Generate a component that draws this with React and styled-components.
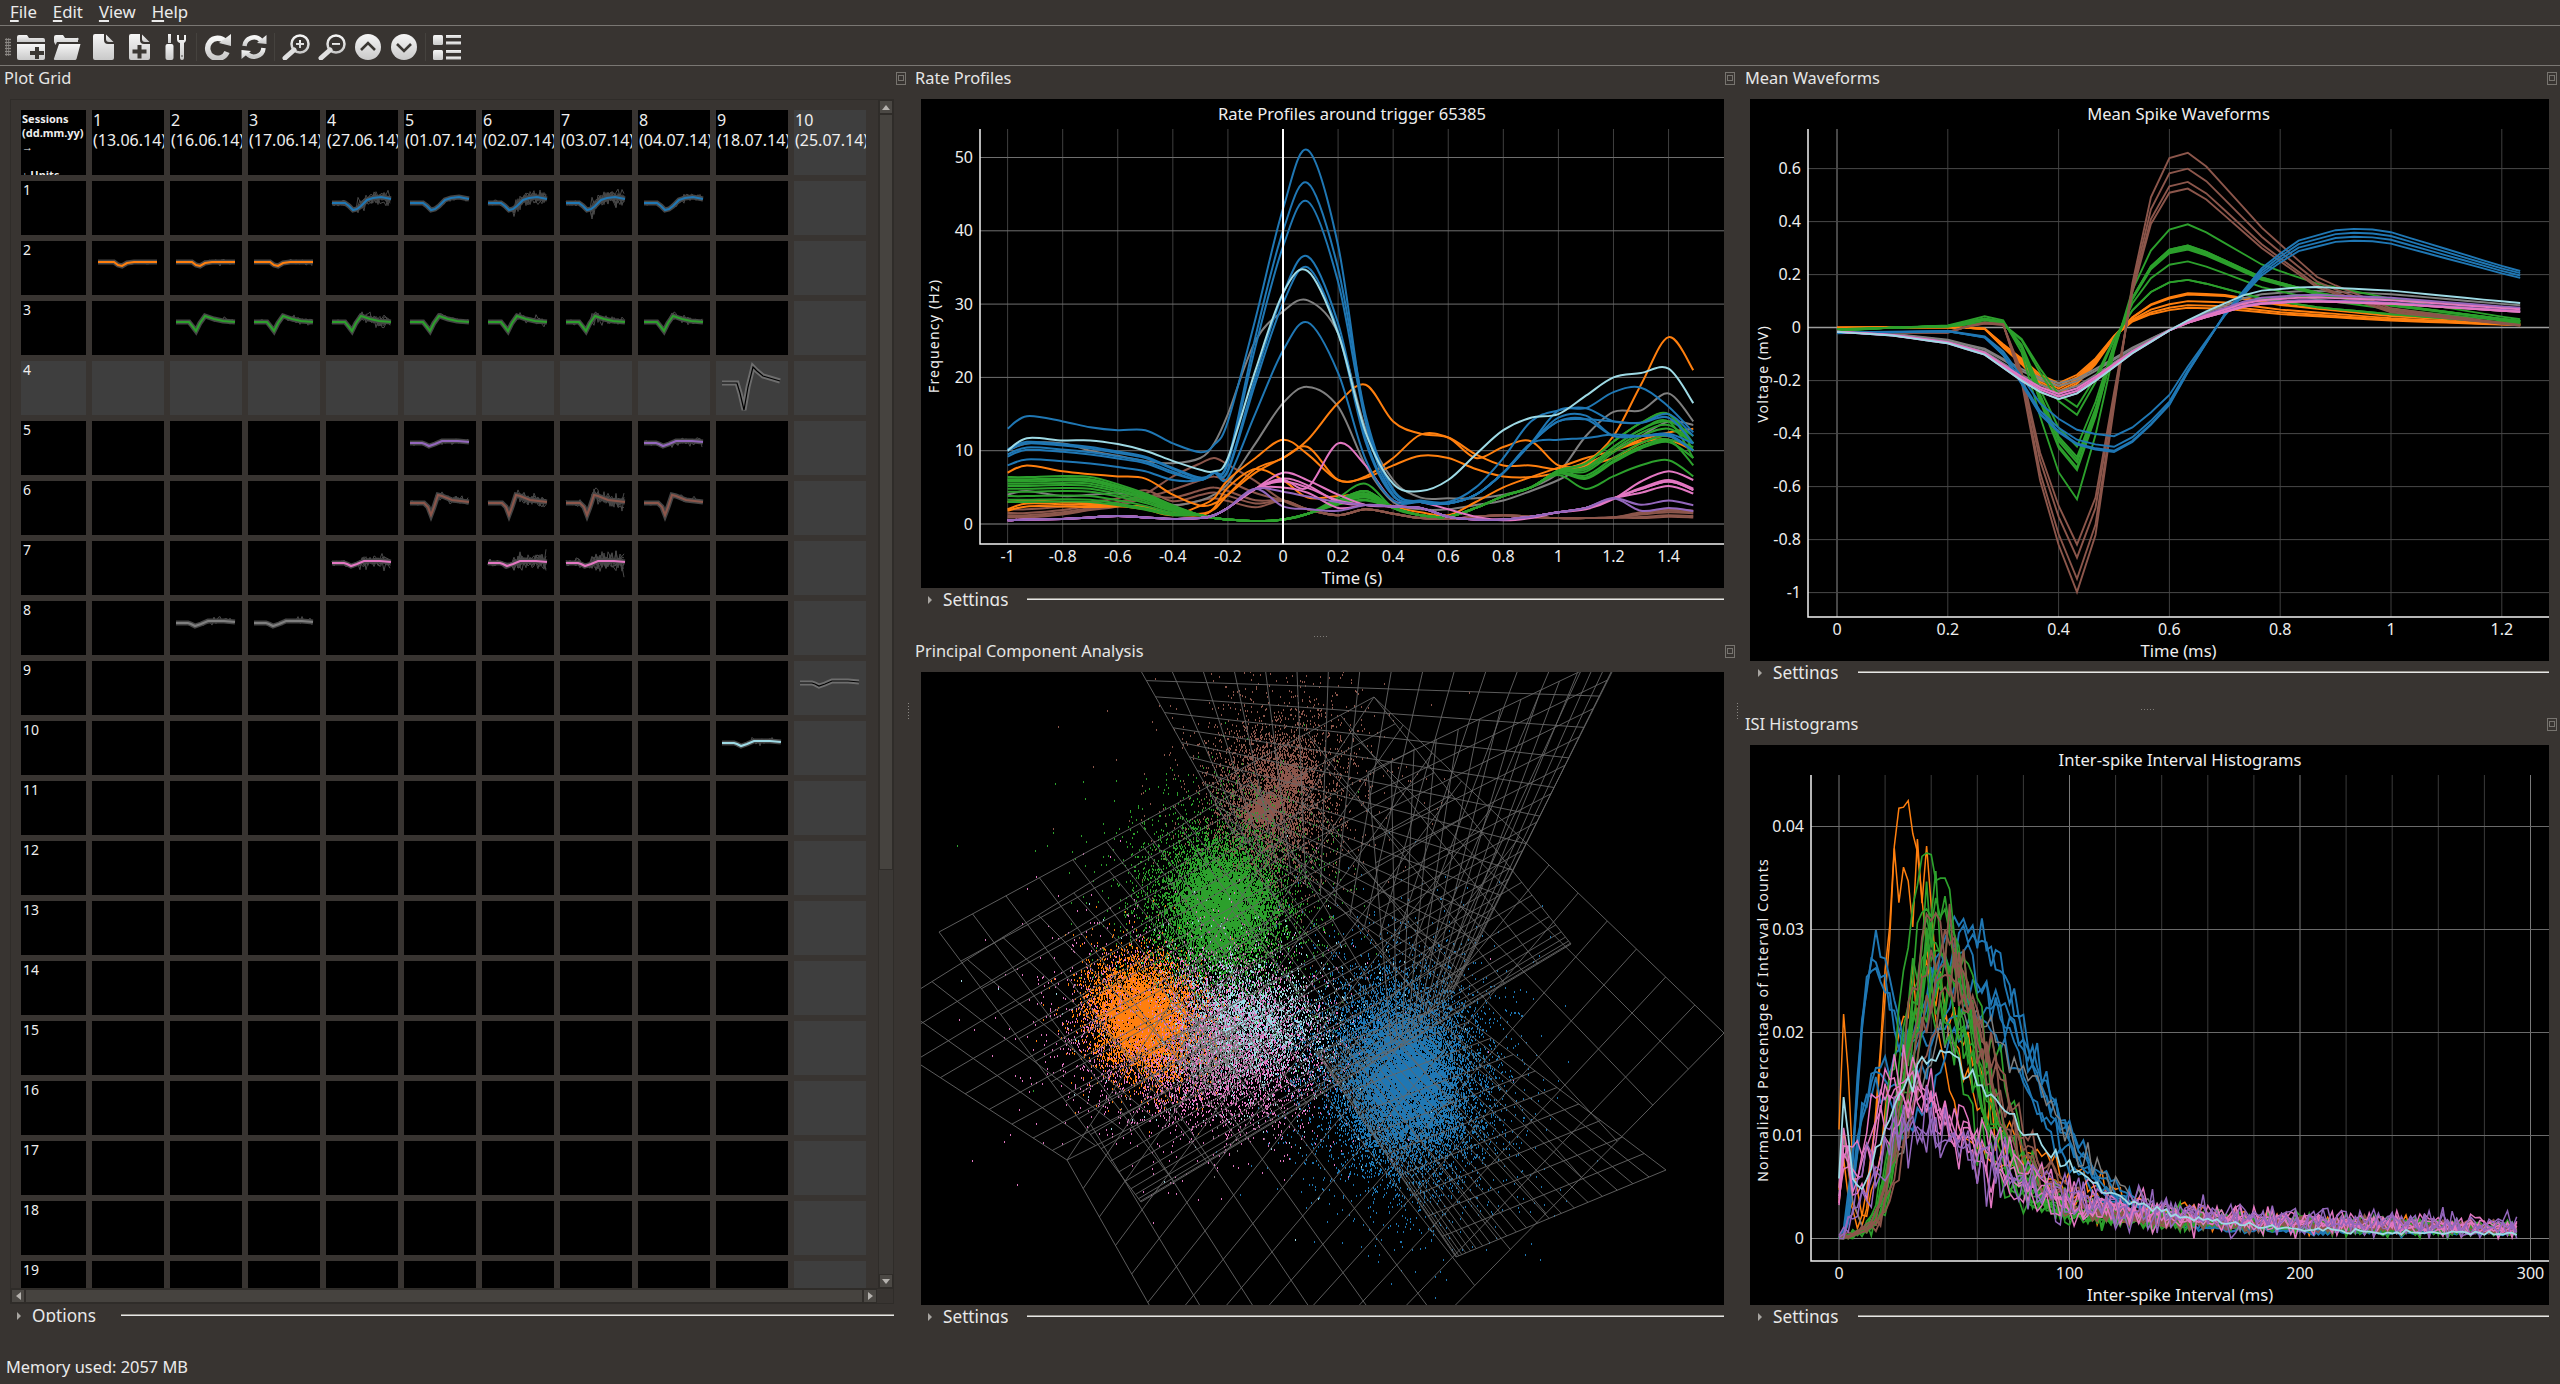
import React from "react";
import styled, { createGlobalStyle } from "styled-components";

const FONT = '"Noto Sans", "Open Sans", sans-serif';
const BG = "#383431";
const C = { blue: "#1f77b4", orange: "#ff7f0e", green: "#2ca02c", brown: "#8c564b", pink: "#e377c2", purple: "#9467bd", gray: "#7f7f7f", cyan: "#9edae5" };

/* ---------- deterministic random ---------- */
const rng = (seed) => {
  let a = seed >>> 0;
  return () => {
    a = (a + 0x6d2b79f5) | 0;
    let t = Math.imul(a ^ (a >>> 15), 1 | a);
    t = (t + Math.imul(t ^ (t >>> 7), 61 | t)) ^ t;
    return ((t ^ (t >>> 14)) >>> 0) / 4294967296;
  };
};
const gauss = (r) => Math.sqrt(-2 * Math.log(r() + 1e-9)) * Math.cos(2 * Math.PI * r());
const lerpKnots = (knots, t) => {
  if (t <= knots[0][0]) return knots[0][1];
  for (let i = 1; i < knots.length; i++) {
    if (t <= knots[i][0]) {
      const [a, b] = [knots[i - 1], knots[i]];
      return a[1] + ((b[1] - a[1]) * (t - a[0])) / (b[0] - a[0]);
    }
  }
  return knots[knots.length - 1][1];
};
const polyline = (pts) => "M" + pts.map((p) => `${p[0].toFixed(1)} ${p[1].toFixed(1)}`).join("L");
const spline = (pts) => {
  let d = `M${pts[0][0].toFixed(1)} ${pts[0][1].toFixed(1)}`;
  for (let i = 0; i < pts.length - 1; i++) {
    const p0 = pts[Math.max(i - 1, 0)], p1 = pts[i], p2 = pts[i + 1], p3 = pts[Math.min(i + 2, pts.length - 1)];
    const c1 = [p1[0] + (p2[0] - p0[0]) / 6, p1[1] + (p2[1] - p0[1]) / 6];
    const c2 = [p2[0] - (p3[0] - p1[0]) / 6, p2[1] - (p3[1] - p1[1]) / 6];
    d += `C${c1[0].toFixed(1)} ${c1[1].toFixed(1)} ${c2[0].toFixed(1)} ${c2[1].toFixed(1)} ${p2[0].toFixed(1)} ${p2[1].toFixed(1)}`;
  }
  return d;
};

/* ---------- rate profile data ---------- */
const T = [-1, -0.93, -0.8, -0.7, -0.6, -0.5, -0.4, -0.3, -0.25, -0.2, -0.1, 0, 0.09, 0.2, 0.3, 0.4, 0.5, 0.6, 0.7, 0.8, 0.9, 1, 1.1, 1.2, 1.3, 1.4, 1.49];
const blueRate = (p, L, R, right) => [L, 1.1 * L, 1.07 * L, 1.03 * L, 0.97 * L, 0.9 * L, 0.75 * L, Math.max(6, 0.62 * L), 7, p * 0.12 + 3, p * 0.55, p * 0.86, p, p * 0.75, p * 0.32, p * 0.08 + 1, 3, 2.8, 4, 7, 11, R, R * 1.02, ...(right || [R * 0.95, R * 0.92, R * 0.9, R * 0.75])];
const greenRate = (L, b, E, M) => [L, L, L * 1.02, L, L * 0.85, L * 0.65, L * 0.4, 1.2, 0.8, 0.6, 0.4, 0.6, 1.4, 2.6 + b * 0.4, 3 + b, 2.2, 1.2, 1, 2.2, 3.8, 5, 5.8 + E * 0.1, E * 0.55, E * 0.75, E * 0.92, E, M];
const brownRate = (L, P, R) => [L, L, L + 0.4, L + 1, L + 1.5, L + 2.6, P * 0.72, P * 0.92, P, P * 0.9, P * 0.65, 3.2, 2, 1.2, 2, 1.4, 0.8, 0.7, 1, 1.2, 1, 0.8, 0.8, 0.9, R * 0.8, R, R * 0.9];
const pinkRate = (P, b, E) => [0.5, 0.6, 0.7, 0.9, 1.1, 0.9, 0.7, 0.8, 1.2, 2.2, 4.8, P, P * 0.85, b, 2.6, 2.4, 2.2, 1, 0.6, 0.6, 1, 1.6, 2.2, 3.5, E * 0.82, E, E * 0.8];
const RATE = [
  [C.brown, brownRate(1.5, 9, 2)], [C.brown, brownRate(1, 6.5, 1.8)], [C.brown, brownRate(1.2, 5, 1.6)], [C.brown, brownRate(2, 4.3, 1)], [C.brown, brownRate(0.9, 3.5, 1.2)],
  [C.gray, [10, 11, 11, 10, 9.3, 8.6, 8.3, 9, 11, 15, 25, 29, 30.5, 26, 13, 6, 3.6, 3.5, 3.5, 4, 5, 7, 12, 15.3, 15.5, 17.8, 14]],
  [C.gray, [4, 4.5, 3.8, 4, 4.2, 3.8, 2.6, 3.2, 4, 5.5, 11, 16.5, 18.7, 16, 8, 3, 2, 2, 2.6, 3.2, 4.5, 6, 8, 10, 12, 14, 13.5]],
  [C.orange, [7, 8, 7.2, 6.8, 6.5, 6.2, 4, 2.5, 2.8, 4, 7, 9, 10.5, 6, 6.5, 9, 12.2, 11.8, 9.5, 8, 8, 7.5, 8.5, 12, 19, 25.5, 21]],
  [C.orange, [2, 2.8, 2.7, 2.6, 2.5, 2.2, 1.5, 1.4, 2, 4, 7.5, 9, 11.5, 16.5, 19, 14, 12.3, 11.8, 9, 10.5, 11.3, 8, 8.2, 10, 11.5, 12.5, 13]],
  [C.orange, [3, 3.2, 3, 2.8, 2.5, 2, 1.2, 2.5, 3.5, 6, 9, 11.5, 9.5, 6, 6.3, 8, 9.3, 9, 7.5, 6.5, 6.4, 7, 8, 9, 11, 12, 10]],
  [C.orange, [1.8, 2.4, 2.4, 2.3, 2.4, 2.4, 1.4, 1.2, 2.2, 5, 7.5, 6, 3.6, 3.8, 4, 2.4, 1.6, 1.2, 3, 5, 6.4, 7.7, 9, 10, 11.2, 11.5, 10]],
  [C.green, greenRate(6, 1.5, 15, 10)], [C.green, greenRate(5.8, 2.5, 14, 9)], [C.green, greenRate(6.1, 0.8, 11.5, 10.5)], [C.green, greenRate(5.5, 1, 11.2, 9)], [C.green, greenRate(4.4, 1.2, 13.5, 11)],
  [C.green, greenRate(3.8, 0.3, 8.7, 6.5)], [C.green, greenRate(3.3, 1.5, 11.5, 8)], [C.green, greenRate(3, 0.6, 15, 11)], [C.green, greenRate(6.4, 0.2, 12, 10)], [C.green, greenRate(5.2, 1.5, 13, 11)], [C.green, greenRate(4.8, 0.7, 14, 12)],
  [C.pink, [...pinkRate(6, 4, 7.2).slice(0, 12), 5, 11, 8, 3.2, 3, 2, 1, 0.5, 0.8, 1.6, 2, 3.4, 5.8, 7.2, 6]], [C.pink, pinkRate(7, 4, 6)], [C.pink, pinkRate(6.2, 3, 5.8)], [C.pink, pinkRate(5.8, 3.2, 5.2)], [C.pink, pinkRate(5, 2.2, 5.8)],
  [C.purple, pinkRate(4.4, 3, 3.2)], [C.purple, pinkRate(2.4, 1.8, 2.2)],
  [C.blue, [13, 14.7, 14, 13.2, 12.8, 12.8, 11, 9.8, 10.8, 14, 28, 43, 51, 38, 14, 4, 3.2, 3, 5, 9, 14, 15.5, 15.8, 14, 13.8, 14.5, 11]],
  [C.blue, blueRate(46.5, 10, 14.5, [12, 12, 12.2, 10])], [C.blue, blueRate(44, 10.2, 14, [12, 12, 12, 10])],
  [C.blue, blueRate(36.5, 9.5, 15.5, [18, 18.6, 16, 12.5])], [C.blue, blueRate(27.5, 8, 11.5, [12.2, 12, 12.3, 11])], [C.blue, blueRate(35, 9.2, 14, [14, 13.8, 15, 12])],
  [C.cyan, [10, 11.7, 11.4, 11.4, 10.9, 10, 8.6, 7.4, 7.2, 9, 21, 31.5, 34.5, 26, 12.5, 5.5, 4.5, 6, 9.5, 12.8, 14.5, 15, 17.5, 20, 20.6, 21.2, 16.5]],
];
const rateX = (t) => 362 + 275.4 * t;
const rateY = (v) => 425 - 7.33 * v;
const RATE_PATHS = RATE.map(([c, vs]) => ({ c, d: spline(vs.map((v, i) => [rateX(T[i]), rateY(v)])) }));

/* ---------- mean waveform data ---------- */
const brownTpl = [[0, -0.02], [0.2, -0.02], [0.267, 0.03], [0.3, 0.02], [0.333, -0.2], [0.367, -0.58], [0.4, -0.82], [0.433, -1], [0.467, -0.78], [0.5, -0.3], [0.533, 0.25], [0.567, 0.75], [0.6, 0.97], [0.633, 1], [0.667, 0.92], [0.77, 0.56], [0.87, 0.28], [1, 0.11], [1.23, 0.015]];
const greenTpl = [[0, -0.02], [0.2, 0.02], [0.267, 0.11], [0.3, 0.07], [0.333, -0.14], [0.367, -0.52], [0.4, -0.84], [0.433, -1], [0.467, -0.62], [0.5, -0.14], [0.533, 0.36], [0.567, 0.75], [0.6, 0.95], [0.633, 1], [0.667, 0.92], [0.77, 0.6], [0.87, 0.42], [1, 0.28], [1.23, 0.08]];
const orangeTpl = [[0, 0], [0.2, 0.01], [0.267, -0.02], [0.3, -0.3], [0.333, -0.55], [0.367, -0.85], [0.4, -1], [0.433, -0.85], [0.467, -0.55], [0.5, -0.15], [0.533, 0.3], [0.567, 0.68], [0.6, 0.88], [0.633, 1], [0.7, 0.95], [0.8, 0.68], [1, 0.35], [1.23, 0.12]];
const blueTpl = [[0, -0.045], [0.2, -0.03], [0.267, -0.08], [0.3, -0.22], [0.333, -0.45], [0.367, -0.7], [0.4, -0.84], [0.433, -0.94], [0.467, -0.98], [0.5, -1], [0.533, -0.92], [0.567, -0.78], [0.6, -0.62], [0.633, -0.36], [0.667, -0.12], [0.7, 0.14], [0.77, 0.62], [0.83, 0.87], [0.9, 0.98], [0.95, 1], [1, 0.96], [1.23, 0.57]];
const softTpl = [[0, -0.06], [0.1, -0.11], [0.2, -0.22], [0.267, -0.38], [0.333, -0.74], [0.367, -0.9], [0.4, -1], [0.433, -0.92], [0.467, -0.74], [0.5, -0.55], [0.533, -0.36], [0.6, -0.04], [0.667, 0.4], [0.75, 0.88], [0.85, 1], [1, 0.9], [1.23, 0.6]];
const MEAN_DEFS = [
  [C.orange, orangeTpl, 0.21, 0.13], [C.orange, orangeTpl, 0.24, 0.1], [C.orange, orangeTpl, 0.22, 0.085], [C.orange, orangeTpl, 0.25, 0.125], [C.orange, orangeTpl, 0.23, 0.075],
  [C.gray, softTpl, 0.21, 0.14], [C.gray, softTpl, 0.22, 0.1], [C.gray, softTpl, 0.24, 0.12],
  ...[[0.65, 0.39], [0.54, 0.31], [0.53, 0.305], [0.51, 0.3], [0.5, 0.295], [0.49, 0.31], [0.45, 0.25], [0.33, 0.18], [0.3, 0.18]].map(([n, p]) => [C.green, greenTpl, n, p]),
  ...[[1, 0.66], [0.95, 0.6], [0.87, 0.55], [0.82, 0.525]].map(([n, p]) => [C.brown, brownTpl, n, p]),
  ...[[0.47, 0.375], [0.465, 0.36], [0.45, 0.345], [0.41, 0.33]].map(([n, p]) => [C.blue, blueTpl, n, p]),
  [C.purple, softTpl, 0.26, 0.125], [C.purple, softTpl, 0.25, 0.105], [C.pink, softTpl, 0.27, 0.115], [C.pink, softTpl, 0.26, 0.1], [C.pink, softTpl, 0.25, 0.1], [C.cyan, softTpl, 0.27, 0.155],
];
const MEAN_PATHS = MEAN_DEFS.map(([c, tpl, n, p]) => {
  const pts = [];
  for (let i = 0; i <= 37; i++) {
    const t = i * 0.03333;
    const v = lerpKnots(tpl, t);
    pts.push([87 + 554 * t, 228.6 - 265 * (v < 0 ? v * n : v * p)]);
  }
  return { c, d: polyline(pts) };
});

/* ---------- ISI data ---------- */
const bump = (t, A, Tp, k) => (t <= 0 ? 0 : A * Math.pow(t / Tp, k) * Math.exp(k * (1 - t / Tp)));
const isiCurve = (seed, c, parts, opts = {}) => {
  const r = rng(seed);
  const { noise = 0.55, tail = 0.0034, spike = 0, delay = 0, sw = 1.5 } = opts;
  const pts = [];
  for (let t = 0; t <= 295; t += 2) {
    let v = 0;
    parts.forEach(([A, Tp, k]) => { v += bump(t - delay, A, Tp, k); });
    v += tail * Math.exp(-t / 230) * Math.min(1, t / 50);
    if (spike && t < 10) v += spike * Math.exp(-Math.abs(t - 2.5) / 2.5);
    v += gauss(r) * noise * Math.sqrt(Math.max(v, 0.0002)) * 0.02;
    pts.push([89 + 2.305 * t, 493.5 - 10300 * Math.max(v, 0)]);
  }
  return { c, d: polyline(pts), sw };
};
const ISI_PATHS = [
  isiCurve(1, C.orange, [[0.0395, 28, 10], [0.005, 60, 5]], { spike: 0.012, noise: 0.25 }),
  isiCurve(2, C.orange, [[0.03, 28, 8], [0.01, 50, 6]], { spike: 0.03, noise: 0.6 }),
  isiCurve(3, C.orange, [[0.022, 35, 6], [0.006, 70, 5]], { spike: 0.008, noise: 0.6 }),
  ...[[0.029, 55, 6], [0.028, 58, 6.5], [0.026, 52, 5.5], [0.023, 60, 6], [0.021, 63, 7], [0.02, 56, 5]].map(([A, Tp, k], i) => isiCurve(10 + i, C.blue, [[A, Tp, k], [i % 2 ? 0.026 : 0.014, 15, 3.5]], { noise: 0.32, tail: 0.002, sw: 1.9 })),
  isiCurve(20, C.gray, [[0.019, 56, 4.5]], { spike: 0.012, noise: 0.4 }),
  ...[0.034, 0.031, 0.03, 0.028, 0.027, 0.026, 0.025, 0.024, 0.023, 0.022, 0.02].map((A, i) => isiCurve(30 + i, C.green, [[A, 34 + (i % 4) * 2, 5.5 + (i % 3)]], { noise: 0.55, delay: 5, sw: 1.7 })),
  ...[0.028, 0.026, 0.024, 0.022, 0.021].map((A, i) => isiCurve(50 + i, C.brown, [[A, 36 + i * 2, 5.5]], { noise: 0.5, delay: 6, sw: 1.8 })),
  ...[0.015, 0.013, 0.012, 0.011, 0.01].map((A, i) => isiCurve(60 + i, C.pink, [[A, 22 + i * 3, 1.8]], { spike: 0.01, noise: 0.7, tail: 0.004 })),
  ...[0.009, 0.008, 0.0075].map((A, i) => isiCurve(70 + i, C.purple, [[A, 28 + i * 2, 1.6]], { noise: 0.95, tail: 0.0042 })),
  isiCurve(80, C.cyan, [[0.016, 42, 2]], { spike: 0.016, noise: 0.22, tail: 0.0018, sw: 1.8 }),
];

/* ---------- PCA data ---------- */
const cloud = (seed, n, cx, cy, sx, sy, rot = 0, wide = 2.1, wideShare = 0.2) => {
  const r = rng(seed);
  const cs = Math.cos(rot), sn = Math.sin(rot);
  let d = "";
  for (let i = 0; i < n; i++) {
    const m = r() < wideShare ? wide : 1;
    const a = gauss(r) * sx * m, b = gauss(r) * sy * m;
    d += `M${Math.round(cx + a * cs - b * sn)} ${Math.round(cy + a * sn + b * cs)}h1.4`;
  }
  return d;
};
const CLOUDS = [
  [C.brown, cloud(1, 4600, 352, 125, 30, 40, 0.25) + cloud(2, 450, 370, 104, 8, 7) + cloud(3, 450, 349, 134, 8, 7) + cloud(4, 350, 333, 143, 7, 6)],
  [C.green, cloud(5, 11500, 300, 235, 26, 30, 0.1, 1.75, 0.35) + cloud(6, 70, 215, 190, 45, 45)],
  [C.pink, cloud(9, 900, 205, 340, 30, 30, 0.5)],
  [C.pink, cloud(7, 4500, 285, 372, 54, 40, 0.1, 1.5, 0.18)],
  [C.cyan, cloud(8, 3600, 325, 352, 42, 28, 0.2, 1.9, 0.12)],
  [C.orange, cloud(10, 7000, 222, 345, 24, 28, -0.5, 1.3, 0.15)],
  [C.pink, cloud(14, 1600, 300, 375, 46, 36, 0.1, 1.3, 0.15)],
  [C.gray, cloud(11, 1300, 288, 378, 20, 20)],
  [C.blue, cloud(12, 15500, 482, 405, 30, 40, -0.16, 1.65, 0.3) + cloud(13, 130, 500, 410, 55, 55)],
];
const warpEnd = (v, p) => (p === 1 ? v : 1 - Math.pow(1 - v, p));
const plane = ([a, b, c, d], nu, nv, pu = 1, pv = 1) => {
  const mix = (p, q, t) => [p[0] + (q[0] - p[0]) * t, p[1] + (q[1] - p[1]) * t];
  let path = "";
  const seg = (p, q) => { path += `M${p[0].toFixed(1)} ${p[1].toFixed(1)}L${q[0].toFixed(1)} ${q[1].toFixed(1)}`; };
  for (let i = 0; i <= nu; i++) { const u = warpEnd(i / nu, pu); seg(mix(a, b, u), mix(d, c, u)); }
  for (let j = 0; j <= nv; j++) { const v = warpEnd(j / nv, pv); seg(mix(a, d, v), mix(b, c, v)); }
  return path;
};
const PLANES = [
  plane([[453, 25], [18, 260], [220, 530], [650, 272]], 13, 18, 1, 2),
  plane([[453, 25], [803, 361], [340, 830], [146, 488]], 12, 13),
  plane([[745, 498], [535, 585], [395, 380], [527, 333]], 22, 10, 1.8, 1),
  plane([[216, -8], [695, -8], [532, 317], [311, 160]], 15, 13, 1, 1.3),
  plane([[447, 100], [700, -20], [532, 320], [470, 372]], 13, 12, 1.2, 1),
  plane([[-60, 354], [330, 110], [460, 330], [146, 488]], 11, 9, 1, 1.2),
];

/* ---------- small waves ---------- */
const WAVES = {
  slow: [[6, 22], [19, 22], [23, 25], [27, 29], [31, 28], [35, 25], [41, 19], [47, 17], [55, 16], [65, 18]],
  spike: [[6, 21], [19, 21], [23, 26], [26, 30], [30, 22], [35, 15], [44, 18], [53, 20], [65, 21]],
  flat: [[6, 21], [22, 21], [26, 24], [30, 25], [35, 22], [42, 21], [65, 21]],
  soft: [[6, 22], [18, 22], [21, 23], [25, 25], [31, 23], [38, 20], [54, 20], [65, 21]],
  wide: [[6, 22], [20, 22], [24, 26], [27, 34], [30, 26], [34, 14], [38, 15], [48, 19], [65, 21]],
  tall: [[6, 22], [21, 22], [24, 32], [28, 49], [32, 26], [37, 6], [41, 10], [47, 15], [64, 20]],
};
const Wave = ({ shape, color, noise = 1, seed = 1, dim }) => {
  const base = WAVES[shape];
  const r = rng(seed * 97);
  const interp = [];
  for (let x = 6; x <= 65; x += 2) interp.push([x, lerpKnots(base, x)]);
  const traces = [];
  for (let i = 0; i < Math.round(noise * 4); i++) {
    traces.push(polyline(interp.map(([x, y]) => [x, y + gauss(r) * (0.6 + (x > 30 ? noise * 1.9 : noise * 0.4))])));
  }
  return (
    <CellSvg viewBox="0 0 72 54">
      <path d={polyline(base)} fill="none" stroke={dim ? "#6e6e6e" : "#454545"} strokeWidth={5} />
      {traces.map((d, i) => (<path key={i} d={d} fill="none" stroke="#484848" strokeWidth="1" />))}
      <path d={polyline(base)} fill="none" stroke={dim ? "#000" : color} strokeWidth={dim ? 1.2 : 2.1} />
    </CellSvg>
  );
};

const PLOTS = {
  1: { 4: 1.4, 5: 0.4, 6: 1.6, 7: 1.7, 8: 0.7, c: C.blue, s: "slow" },
  2: { 1: 0.3, 2: 0.5, 3: 0.4, c: C.orange, s: "flat" },
  3: { 2: 0.6, 3: 0.8, 4: 1.6, 5: 0.6, 6: 0.8, 7: 1.1, 8: 0.7, c: C.green, s: "spike" },
  4: { 9: 0.01, c: "#000", s: "tall", d: 1 },
  5: { 5: 0.6, 8: 0.9, c: C.purple, s: "soft" },
  6: { 5: 0.9, 6: 1.3, 7: 1.4, 8: 0.6, c: C.brown, s: "wide" },
  7: { 4: 1.4, 6: 2, 7: 2.1, c: C.pink, s: "soft" },
  8: { 2: 0.6, 3: 0.6, c: C.gray, s: "soft" },
  9: { 10: 0.01, c: "#000", s: "soft", d: 1 },
  10: { 9: 0.6, c: C.cyan, s: "soft" },
};
const SESSIONS = ["13.06.14", "16.06.14", "17.06.14", "27.06.14", "01.07.14", "02.07.14", "03.07.14", "04.07.14", "18.07.14", "25.07.14"];

/* ---------- styled parts ---------- */
const Global = createGlobalStyle`
  html, body { margin: 0; padding: 0; background: ${BG}; }
  body { font-family: ${FONT}; color: #ebebeb; }
`;
const Page = styled.div`
  width: 2560px; height: 1384px; overflow: hidden; display: flex; flex-direction: column; background: ${BG};
  font-family: ${FONT}; font-size: 16.4px;
`;
const MenuBar = styled.div`
  height: 25px; display: flex; gap: 16px; padding: 0 0 2px 10px; box-sizing: border-box; align-items: center; font-size: 16.8px; line-height: 22px; flex: none;
`;
const MenuRule = styled.div`height: 1px; background: #7a7773; flex: none;`;
const MenuItem = styled.span`color: #ebebeb;`;
const Mnemonic = styled.span`text-decoration: underline; text-decoration-thickness: 2px; text-underline-offset: 2px;`;
const ToolBar = styled.div`
  height: 40px; display: flex; align-items: center; padding: 3px 0 0 5px; border-bottom: 1px solid #7a7773; box-sizing: border-box; flex: none;
`;
const ToolGrip = styled.div`
  width: 6px; height: 18px; margin-right: 2px; background-image: radial-gradient(#8b8884 1px, transparent 1.2px); background-size: 2.5px 3px;
`;
const ToolButton = styled.div`width: 36px; height: 30px; display: flex; align-items: center; justify-content: center;`;
const ToolSep = styled.div`width: 1px; height: 28px; background: #45423e; margin: 0 3px 0 2.5px;`;
const Workspace = styled.div`display: flex; height: 1263px; flex: none;`;
const Column = styled.div`position: relative; display: flex; flex-direction: column; width: ${(p) => p.$w}px; flex: none;`;
const DockTitle = styled.div`
  height: 33px; display: flex; justify-content: space-between; line-height: 24px; padding: 0 ${(p) => p.$right}px 0 ${(p) => p.$left}px; flex: none; color: #e6e6e6;
`;
const FloatIcon = styled.div`
  width: 8px; height: 11px; margin-top: 6px; border: 1px solid #77746f; position: relative;
  &::after { content: ""; position: absolute; left: 1px; right: 1px; top: 2px; height: 4px; border: 1px solid #77746f; }
`;
const PlotBox = styled.div`
  margin-left: ${(p) => p.$left}px; width: ${(p) => p.$w}px; height: ${(p) => p.$h}px; background: #000; flex: none; overflow: hidden;
`;
const PlotSvg = styled.svg`
  display: block; font-family: ${FONT};
  text { fill: #eeeeee; font-size: 16px; }
`;
const ChartTitle = styled.text`
  && { font-size: 16.6px; }
`;
const AxisTitle = styled.text`
  && { font-size: 14px; letter-spacing: 1.2px; }
`;
const SettingsRow = styled.div`
  height: 24px; display: flex; align-items: flex-start; flex: none; padding: 0 ${(p) => p.$right}px 0 ${(p) => p.$left}px;
`;
const Arrow = styled.div`
  width: 0; height: 0; margin: 8px 11px 0 0; border-left: 4px solid #a8a5a1; border-top: 4px solid transparent; border-bottom: 4px solid transparent;
`;
const CollapseLabel = styled.div`
  height: 18px; overflow: hidden; line-height: 24px; font-size: 17.2px; color: #e8e8e8;
`;
const CollapseLine = styled.div`
  flex: 1; height: 2px; margin: 10px 0 0 ${(p) => p.$gap}px; background: #e6e6e6; border-top: 1px solid #99968f; box-sizing: border-box;
`;
const Splitter = styled.div`
  height: 27px; flex: none; display: flex; justify-content: center; align-items: flex-end; padding-bottom: 1px; box-sizing: border-box;
`;
const HGrip = styled.div`width: 16px; height: 3px; background-image: radial-gradient(#7e7b77 0.8px, transparent 1px); background-size: 3px 3px;`;
const VGrip = styled.div`
  position: absolute; left: 1px; top: 636px; width: 3px; height: 18px; background-image: radial-gradient(#8b8884 0.8px, transparent 1px); background-size: 3px 3px;
`;
const Frame = styled.div`
  margin-left: 10px; width: 884px; height: 1205px; box-sizing: border-box; border: 1px solid #2f2c29; display: flex; flex-direction: column; flex: none;
`;
const FrameBody = styled.div`flex: 1; min-height: 0; display: flex;`;
const Viewport = styled.div`flex: 1; overflow: hidden; padding: 10px 0 0 10px;`;
const CellGrid = styled.div`
  display: grid; grid-template-columns: 65px repeat(10, 72px); grid-template-rows: 65px repeat(19, 54px); gap: 6px;
`;
const Cell = styled.div`
  background: ${(p) => (p.$dim ? "#3e3e3e" : "#000")}; overflow: hidden; color: #eeeeee; white-space: nowrap;
`;
const HeadText = styled.div`font-size: 16px; line-height: 20px; padding-left: 1px;`;
const CornerText = styled.div`font-size: 11px; line-height: 14px; font-weight: 700; padding: 2px 0 0 1px; white-space: pre;`;
const RowText = styled.div`font-size: 14px; line-height: 18px; padding: 0 0 0 2px;`;
const CellSvg = styled.svg`display: block; width: 72px; height: 54px;`;
const VBar = styled.div`width: 14px; display: flex; flex-direction: column; border-left: 1px solid #2f2c29; flex: none;`;
const HBar = styled.div`height: 14px; display: flex; border-top: 1px solid #2f2c29; flex: none; padding-right: 16px;`;
const ArrowBtn = styled.div`
  flex: none; width: 14px; height: 14px; background: #4b4844; border: 1px solid #2f2c29; box-sizing: border-box; display: flex; align-items: center; justify-content: center;
  &::after {
    content: ""; width: 0; height: 0;
    ${(p) => p.$dir === "up" && "border-bottom: 5px solid #b5b2ae; border-left: 4px solid transparent; border-right: 4px solid transparent;"}
    ${(p) => p.$dir === "down" && "border-top: 5px solid #b5b2ae; border-left: 4px solid transparent; border-right: 4px solid transparent;"}
    ${(p) => p.$dir === "left" && "border-right: 5px solid #b5b2ae; border-top: 4px solid transparent; border-bottom: 4px solid transparent;"}
    ${(p) => p.$dir === "right" && "border-left: 5px solid #b5b2ae; border-top: 4px solid transparent; border-bottom: 4px solid transparent;"}
  }
`;
const Thumb = styled.div`
  flex: ${(p) => p.$f}; background: #46433f; border: 1px solid #2f2c29; box-sizing: border-box;
`;
const Track = styled.div`flex: ${(p) => p.$f}; background: #3b3835;`;
const StatusBar = styled.div`height: 55px; flex: none; display: flex; align-items: flex-end; padding: 0 0 5px 6px; box-sizing: border-box; line-height: 24px;`;

/* ---------- toolbar icons ---------- */
const Ico = ({ w = 28, h = 26, children }) => (
  <svg width={w} height={h} viewBox={`0 0 ${w} ${h}`}>
    <defs>
      <linearGradient id="tg" x1="0" y1="0" x2="0" y2="1">
        <stop offset="0" stopColor="#f6f6f6" />
        <stop offset="1" stopColor="#c9c9c9" />
      </linearGradient>
    </defs>
    <g fill="url(#tg)" stroke="none">{children}</g>
  </svg>
);
const DK = "#3a3733";
const icons = {
  folderPlus: (
    <Ico>
      <path d="M0 6V3a2 2 0 0 1 2-2h8l2 3h14a2 2 0 0 1 2 2v2H0z" />
      <path d="M0 10h28v14a2 2 0 0 1-2 2H2a2 2 0 0 1-2-2z" />
      <path d="M18 13h4v4h5v4h-5v4h-4v-4h-5v-4h5z" fill={DK} />
    </Ico>
  ),
  folderOpen: (
    <Ico>
      <path d="M1 8V3a2 2 0 0 1 2-2h7l2 3h12a1 1 0 0 1 1 2v2H4L2.5 11z" />
      <path d="M6 10h21.5l-4 15a2 2 0 0 1-2 1H2a1 1 0 0 1-1-1.5z" />
    </Ico>
  ),
  file: (
    <Ico w={21}>
      <path d="M0 2a2 2 0 0 1 2-2h9v6a4 4 0 0 0 4 4h6v14a2 2 0 0 1-2 2H2a2 2 0 0 1-2-2z" />
      <path d="M13 0.5 20.5 8H16a3 3 0 0 1-3-3z" />
    </Ico>
  ),
  filePlus: (
    <Ico w={21}>
      <path d="M0 2a2 2 0 0 1 2-2h9v6a4 4 0 0 0 4 4h6v14a2 2 0 0 1-2 2H2a2 2 0 0 1-2-2z" />
      <path d="M13 0.5 20.5 8H16a3 3 0 0 1-3-3z" />
      <path d="M8.5 11h4v4.500h5v4h-5V24.500h-4v-5h-5v-4h5z" fill={DK} />
    </Ico>
  ),
  tools: (
    <Ico w={21}>
      <path d="M3 0h3v9h-3z" />
      <path d="M2.500 10h4a2 2 0 0 1 2 2v12a2 2 0 0 1-2 2h-4a2 2 0 0 1-2-2V12a2 2 0 0 1 2-2z" />
      <path d="M12 1v4a4 4 0 0 0 3 4v15a2 2 0 0 0 4 0V9a4 4 0 0 0 2-4V1l-2 0v5h-5V1z" />
      <circle cx="17" cy="22" r="0.8" fill={DK} />
    </Ico>
  ),
  rotate: (
    <Ico>
      <path d="M21 7.500A10 10 0 1 0 23 18" fill="none" stroke="url(#tg)" strokeWidth="5.500" />
      <path d="M15 9 27 0v12z" />
    </Ico>
  ),
  refresh: (
    <Ico w={26}>
      <path d="M3.500 12A9.500 9.500 0 0 1 20 6.500" fill="none" stroke="url(#tg)" strokeWidth="4.500" />
      <path d="M16 9 25.500 1v9z" />
      <path d="M22.500 14A9.500 9.500 0 0 1 6 19.500" fill="none" stroke="url(#tg)" strokeWidth="4.500" />
      <path d="M10 17 0.500 25v-9z" />
    </Ico>
  ),
  zoomIn: (
    <Ico>
      <circle cx="18" cy="10" r="8.500" fill="none" stroke="url(#tg)" strokeWidth="2.500" />
      <path d="M12 16 3 24" stroke="#e0e0e0" strokeWidth="5" strokeLinecap="round" />
      <path d="M17 6h2v3h3v2h-3v3h-2v-3h-3V9h3z" />
    </Ico>
  ),
  zoomOut: (
    <Ico>
      <circle cx="18" cy="10" r="8.500" fill="none" stroke="url(#tg)" strokeWidth="2.500" />
      <path d="M12 16 3 24" stroke="#e0e0e0" strokeWidth="5" strokeLinecap="round" />
      <path d="M14 9h8v2h-8z" />
    </Ico>
  ),
  up: (
    <Ico h={26} w={26}>
      <circle cx="13" cy="13" r="13" />
      <path d="M6 16l7-7 7 7" fill="none" stroke={DK} strokeWidth="2.600" />
    </Ico>
  ),
  down: (
    <Ico h={26} w={26}>
      <circle cx="13" cy="13" r="13" />
      <path d="M6 10l7 7 7-7" fill="none" stroke={DK} strokeWidth="2.600" />
    </Ico>
  ),
  list: (
    <Ico>
      <rect x="0" y="1" width="10" height="10" rx="1.500" />
      <rect x="0" y="16" width="10" height="10" rx="1.500" />
      <rect x="13" y="1" width="15" height="3" />
      <rect x="13" y="7.500" width="15" height="3" />
      <rect x="13" y="16" width="15" height="3" />
      <rect x="13" y="22.500" width="15" height="3" />
    </Ico>
  ),
};

/* ---------- charts ---------- */
const Ticks = ({ items, axis, orient }) =>
  items.map(([pos, label]) =>
    orient === "x" ? (
      <text key={label} x={pos} y={axis + 18} textAnchor="middle">{label}</text>
    ) : (
      <text key={label} x={axis - 7} y={pos + 5.5} textAnchor="end">{label}</text>
    )
  );
const rangeTicks = (from, to, step, f, fmt) => {
  const out = [];
  const n = Math.round((to - from) / step);
  for (let i = 0; i <= n; i++) {
    const v = from + i * step;
    out.push([f(v), fmt(+v.toFixed(4))]);
  }
  return out;
};
const ChartFrame = ({ w, h, left, bottom, top, title, xlabel, ylabel, ylx, yly, xly, children }) => (
  <PlotSvg width={w} height={h} viewBox={`0 0 ${w} ${h}`}>
    <ChartTitle x={(left + w) / 2} y={21} textAnchor="middle">{title}</ChartTitle>
    {children}
    <path d={`M${left} ${top}V${bottom}H${w}`} fill="none" stroke="#f2f2f2" strokeWidth="1.500" />
    <ChartTitle x={(left + w) / 2} y={xly} textAnchor="middle">{xlabel}</ChartTitle>
    <AxisTitle transform={`translate(${ylx} ${yly}) rotate(-90)`} textAnchor="middle">{ylabel}</AxisTitle>
  </PlotSvg>
);
const RateChart = () => {
  const xt = rangeTicks(-1, 1.4, 0.2, rateX, String);
  const yt = rangeTicks(0, 50, 10, rateY, String);
  return (
    <ChartFrame w={803} h={489} left={59} bottom={445} top={30} title="Rate Profiles around trigger 65385" xlabel="Time (s)" ylabel="Frequency (Hz)" ylx={18} yly={237} xly={485}>
      {xt.map(([x, l]) => (<line key={l} x1={x} x2={x} y1={30} y2={445} stroke="#3f3f3f" />))}
      {yt.map(([y, l]) => (<line key={l} x1={59} x2={803} y1={y} y2={y} stroke={l === "0" ? "#8a8a8a" : "#6f6f6f"} />))}
      <Ticks items={xt} axis={445} orient="x" />
      <Ticks items={yt} axis={59} orient="y" />
      {RATE_PATHS.map((p, i) => (<path key={i} d={p.d} fill="none" stroke={p.c} strokeWidth="2" />))}
      <line x1={362} x2={362} y1={30} y2={445} stroke="#fff" strokeWidth="2" />
    </ChartFrame>
  );
};
const MeanChart = () => {
  const xt = rangeTicks(0, 1.2, 0.2, (t) => 87 + 554 * t, String);
  const yt = rangeTicks(-1, 0.6, 0.2, (v) => 228.6 - 265 * v, String);
  return (
    <ChartFrame w={799} h={562} left={58} bottom={518} top={30} title="Mean Spike Waveforms" xlabel="Time (ms)" ylabel="Voltage (mV)" ylx={18} yly={275} xly={558}>
      {xt.map(([x, l]) => (<line key={l} x1={x} x2={x} y1={30} y2={518} stroke={l === "0" ? "#8f8f8f" : "#3f3f3f"} />))}
      {yt.map(([y, l]) => (<line key={l} x1={58} x2={799} y1={y} y2={y} stroke={l === "0" ? "#9c9c9c" : "#484848"} strokeWidth={l === "0" ? 1.5 : 1} />))}
      <Ticks items={xt} axis={518} orient="x" />
      <Ticks items={yt} axis={58} orient="y" />
      {MEAN_PATHS.map((p, i) => (<path key={i} d={p.d} fill="none" stroke={p.c} strokeWidth="1.900" />))}
    </ChartFrame>
  );
};
const IsiChart = () => {
  const xt = rangeTicks(0, 300, 100, (t) => 89 + 2.305 * t, String);
  const yt = rangeTicks(0, 0.04, 0.01, (v) => 493.5 - 10300 * v, String);
  const minor = [];
  for (let t = 20; t <= 300; t += 20) if (t % 100) minor.push(89 + 2.305 * t);
  return (
    <ChartFrame w={799} h={560} left={61} bottom={516} top={30} title="Inter-spike Interval Histograms" xlabel="Inter-spike Interval (ms)" ylabel="Normalized Percentage of Interval Counts" ylx={18} yly={275} xly={556}>
      {minor.map((x) => (<line key={x} x1={x} x2={x} y1={30} y2={516} stroke="#3a3a3a" />))}
      {xt.map(([x, l]) => (<line key={l} x1={x} x2={x} y1={30} y2={516} stroke="#7a7a7a" />))}
      {yt.map(([y, l]) => (<line key={l} x1={61} x2={799} y1={y} y2={y} stroke={l === "0" ? "#7f7f7f" : "#6a6a6a"} />))}
      <Ticks items={xt} axis={516} orient="x" />
      <Ticks items={yt} axis={61} orient="y" />
      {ISI_PATHS.map((p, i) => (<path key={i} d={p.d} fill="none" stroke={p.c} strokeWidth={p.sw} />))}
    </ChartFrame>
  );
};
const PcaChart = () => (
  <PlotSvg width={803} height={633} viewBox="0 0 803 633">
    {CLOUDS.map(([c, d], i) => (<path key={i} d={d} fill="none" stroke={c} strokeWidth="1.400" shapeRendering="crispEdges" />))}
    {PLANES.map((d, i) => (<path key={i} d={d} fill="none" stroke="#666666" strokeWidth="0.900" />))}
  </PlotSvg>
);

const Settings = ({ left, right, gap, label = "Settings" }) => (
  <SettingsRow $left={left} $right={right}>
    <Arrow />
    <CollapseLabel>{label}</CollapseLabel>
    <CollapseLine $gap={gap} />
  </SettingsRow>
);

const PlotGrid = () => {
  const cells = [];
  cells.push(
    <Cell key="corner"><CornerText>{"Sessions\n(dd.mm.yy)\n\u2192\n\n\u2193 Units"}</CornerText></Cell>
  );
  SESSIONS.forEach((s, i) => {
    cells.push(
      <Cell key={`h${i}`} $dim={i === 9}>
        <HeadText>{i + 1}<br />({s})</HeadText>
      </Cell>
    );
  });
  for (let r = 1; r <= 19; r++) {
    const selected = r === 4;
    cells.push(<Cell key={`r${r}`} $dim={selected}><RowText>{r}</RowText></Cell>);
    for (let c = 1; c <= 10; c++) {
      const def = PLOTS[r];
      const noise = def && def[c];
      const dim = selected || c === 10;
      cells.push(
        <Cell key={`c${r}-${c}`} $dim={dim}>
          {noise ? <Wave shape={def.s} color={def.c} noise={noise} seed={r * 20 + c} dim={def.d} /> : null}
        </Cell>
      );
    }
  }
  return <CellGrid>{cells}</CellGrid>;
};

export default function App() {
  const tb = (k) => <ToolButton>{icons[k]}</ToolButton>;
  return (
    <Page>
      <Global />
      <MenuBar>
        <MenuItem><Mnemonic>F</Mnemonic>ile</MenuItem>
        <MenuItem><Mnemonic>E</Mnemonic>dit</MenuItem>
        <MenuItem><Mnemonic>V</Mnemonic>iew</MenuItem>
        <MenuItem><Mnemonic>H</Mnemonic>elp</MenuItem>
      </MenuBar>
      <MenuRule />
      <ToolBar>
        <ToolGrip />
        {tb("folderPlus")}{tb("folderOpen")}{tb("file")}{tb("filePlus")}{tb("tools")}
        <ToolSep />
        {tb("rotate")}{tb("refresh")}
        <ToolSep />
        {tb("zoomIn")}{tb("zoomOut")}{tb("up")}{tb("down")}
        <ToolSep />
        {tb("list")}
      </ToolBar>
      <Workspace>
        <Column $w={906}>
          <DockTitle $left={4} $right={0}>Plot Grid<FloatIcon /></DockTitle>
          <Frame>
            <FrameBody>
              <Viewport><PlotGrid /></Viewport>
              <VBar>
                <ArrowBtn $dir="up" />
                <Thumb $f={755} />
                <Track $f={405} />
                <ArrowBtn $dir="down" />
              </VBar>
            </FrameBody>
            <HBar>
              <ArrowBtn $dir="left" />
              <Thumb $f={1} />
              <ArrowBtn $dir="right" />
            </HBar>
          </Frame>
          <Settings left={17} right={12} gap={25} label="Options" />
        </Column>
        <Column $w={829}>
          <VGrip />
          <DockTitle $left={9} $right={0}>Rate Profiles<FloatIcon /></DockTitle>
          <PlotBox $left={15} $w={803} $h={489}><RateChart /></PlotBox>
          <Settings left={22} right={11} gap={19} />
          <Splitter><HGrip /></Splitter>
          <DockTitle $left={9} $right={0}>Principal Component Analysis<FloatIcon /></DockTitle>
          <PlotBox $left={15} $w={803} $h={633}><PcaChart /></PlotBox>
          <Settings left={22} right={11} gap={19} />
        </Column>
        <Column $w={825}>
          <VGrip />
          <DockTitle $left={10} $right={3}>Mean Waveforms<FloatIcon /></DockTitle>
          <PlotBox $left={15} $w={799} $h={562}><MeanChart /></PlotBox>
          <Settings left={23} right={11} gap={20} />
          <Splitter><HGrip /></Splitter>
          <DockTitle $left={10} $right={3}>ISI Histograms<FloatIcon /></DockTitle>
          <PlotBox $left={15} $w={799} $h={560}><IsiChart /></PlotBox>
          <Settings left={23} right={11} gap={20} />
        </Column>
      </Workspace>
      <StatusBar>Memory used: 2057 MB</StatusBar>
    </Page>
  );
}
